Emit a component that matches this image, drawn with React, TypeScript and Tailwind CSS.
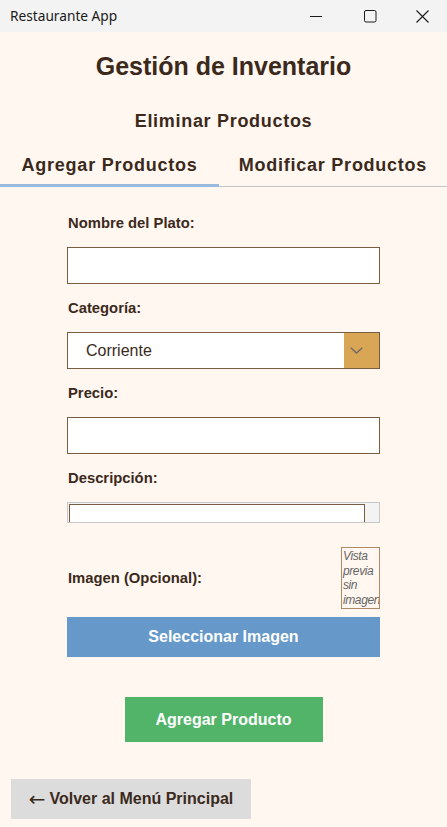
import React from "react";

const dark = "text-[#3b2a1c]";

function Label({ children, className = "" }: { children: React.ReactNode; className?: string }) {
  return (
    <div className={`pl-px text-[14.8px] leading-[17px] font-bold ${dark} ${className}`}>{children}</div>
  );
}

export default function App() {
  return (
    <div
      className="w-[447px] h-[827px] bg-[#fff7f0] flex flex-col overflow-hidden"
      style={{ fontFamily: '"Liberation Sans", Arial, sans-serif' }}
    >
      {/* Title bar */}
      <div className="h-8 bg-[#f3f3f3] flex items-center shrink-0">
        <div
          className="pl-[10px] text-[13.7px] text-[#1a1a1a] flex-1"
          style={{ fontFamily: '"Noto Sans", "Open Sans", sans-serif' }}
        >
          Restaurante App
        </div>
        <div className="flex items-center h-full">
          <div className="w-[46px] h-full flex items-center justify-center">
            <svg width="12" height="12" viewBox="0 0 12 12">
              <line x1="0" y1="6.5" x2="12" y2="6.5" stroke="#1a1a1a" strokeWidth="1" />
            </svg>
          </div>
          <div className="w-[62px] h-full flex items-center justify-center">
            <svg width="13" height="13" viewBox="0 0 13 13">
              <rect x="0.5" y="0.5" width="11.5" height="11.5" rx="1.5" fill="none" stroke="#1a1a1a" strokeWidth="1" />
            </svg>
          </div>
          <div className="w-[46px] h-full flex items-center justify-center pr-[4px]">
            <svg width="13" height="13" viewBox="0 0 13 13">
              <path d="M0.5 0.5 L12.5 12.5 M12.5 0.5 L0.5 12.5" stroke="#1a1a1a" strokeWidth="1.1" fill="none" />
            </svg>
          </div>
        </div>
      </div>

      {/* Heading */}
      <div className={`pt-[19px] text-center text-[25px] leading-[30px] font-bold ${dark}`}>
        Gestión de Inventario
      </div>
      <div className={`mt-[29px] text-center text-[18px] leading-[22px] font-bold tracking-[0.7px] ${dark}`}>
        Eliminar Productos
      </div>

      {/* Tabs */}
      <div className="mt-[22px] flex items-end border-b border-[#c4c4c4]">
        <div
          className={`w-[219px] text-center text-[18px] leading-[22px] font-bold tracking-[0.75px] pb-2 border-b-[3px] border-[#99bbdd] -mb-px ${dark}`}
        >
          Agregar Productos
        </div>
        <div className={`flex-1 text-center text-[18px] leading-[22px] font-bold tracking-[0.75px] pb-[10px] ${dark}`}>
          Modificar Productos
        </div>
      </div>

      {/* Form */}
      <div className="ml-[67px] w-[313px] flex flex-col">
        <Label className="mt-[28px]">Nombre del Plato:</Label>
        <div className="mt-[15px] h-[37px] bg-white border border-[#7a5c40]" />

        <Label className="mt-[16px]">Categoría:</Label>
        <div className="mt-[15px] h-[37px] bg-white border border-[#7a5c40] flex">
          <div className={`flex-1 flex items-center pl-[18px] text-[16px] ${dark}`}>Corriente</div>
          <div className="w-[35px] bg-[#d9a656] flex items-center pl-[6px]">
            <svg width="13" height="7" viewBox="0 0 13 7">
              <path d="M0.7 0.7 L6.5 6 L12.3 0.7" stroke="#6f6a62" strokeWidth="1.4" fill="none" />
            </svg>
          </div>
        </div>

        <Label className="mt-[16px]">Precio:</Label>
        <div className="mt-[15px] h-[37px] bg-white border border-[#7a5c40]" />

        <Label className="mt-[16px]">Descripción:</Label>
        <div className="mt-[15px] h-[21px] border border-[#c8c8c8] flex bg-[#f3f3f3]">
          <div className="flex-1 mt-px ml-px bg-white border-l border-t border-r border-[#7a5c40]" />
          <div className="w-[14px]" />
        </div>

        <div className="mt-[24px] flex items-center justify-between">
          <Label>Imagen (Opcional):</Label>
          <div
            className="w-[39px] h-[62px] border border-[#b08a64] overflow-hidden pl-[1px] pt-[1px] italic text-[12px] leading-[14.7px] tracking-[-0.4px] text-[#666666] whitespace-nowrap"
          >
            Vista
            <br />
            previa
            <br />
            sin
            <br />
            imagen
          </div>
        </div>

        <div className="mt-[8px] h-[40px] bg-[#6699c9] flex items-center justify-center text-white text-[16px] font-bold">
          Seleccionar Imagen
        </div>
      </div>

      <div className="mt-[40px] flex justify-center">
        <div className="w-[198px] h-[45px] bg-[#52b469] flex items-center justify-center text-white text-[16px] font-bold">
          Agregar Producto
        </div>
      </div>

      <div className="mt-[37px] ml-[11px] w-[240px] h-[40px] bg-[#dcdcdc] flex items-center justify-center">
        <span className={`text-[16px] font-bold ${dark} flex items-center`}>
          <span
            className="font-normal text-[20px] leading-[16px] mr-[4px]"
            style={{ fontFamily: '"DejaVu Sans", sans-serif' }}
          >
            ←
          </span>
          Volver al Menú Principal
        </span>
      </div>
    </div>
  );
}
